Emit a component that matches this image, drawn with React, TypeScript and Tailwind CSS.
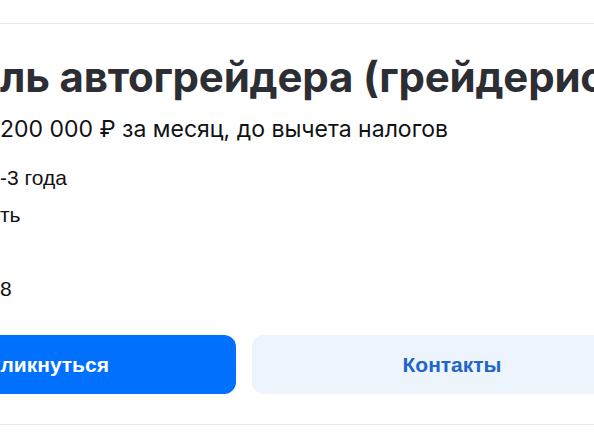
export default function App() {
  const rows = ["-3 года", "ть", "", "8"];

  return (
    <div className="h-[446px] w-[594px] overflow-hidden bg-white font-['Inter',sans-serif]">
      <div className="mt-[23px] border-t border-[#e4e6ea]" />

      <div className="pt-[29px]">
        <h1 className="whitespace-nowrap text-[42px] font-bold leading-[48px] tracking-[-0.2px] text-[#2c2e33]">
          ль автогрейдера (грейдерист)
        </h1>
        <p className="mt-[13px] whitespace-nowrap text-[23px] leading-[30px] text-[#111214]">
          200 000 ₽ за месяц, до вычета налогов
        </p>
        <div className="mt-[15px] font-['Liberation_Sans',Arial,sans-serif] text-[21px] text-[#111214]">
          {rows.map((row, index) => (
            <div key={index} className="h-[37px] leading-[37px] whitespace-nowrap">
              {row || "\u00a0"}
            </div>
          ))}
        </div>
      </div>

      <div className="mt-[28px] flex gap-4 -ml-[164px] font-['Liberation_Sans',Arial,sans-serif]">
        <button className="flex h-[59px] w-[400px] shrink-0 items-center justify-center rounded-xl bg-[#0070ff] text-[21px] font-bold text-white">
          Откликнуться
        </button>
        <button className="flex h-[59px] w-[400px] shrink-0 items-center justify-center rounded-xl bg-[#edf4fc] text-[21px] font-bold text-[#1f66c9]">
          Контакты
        </button>
      </div>

      <div className="mt-[30px] border-t border-[#e4e6ea]" />
    </div>
  );
}
